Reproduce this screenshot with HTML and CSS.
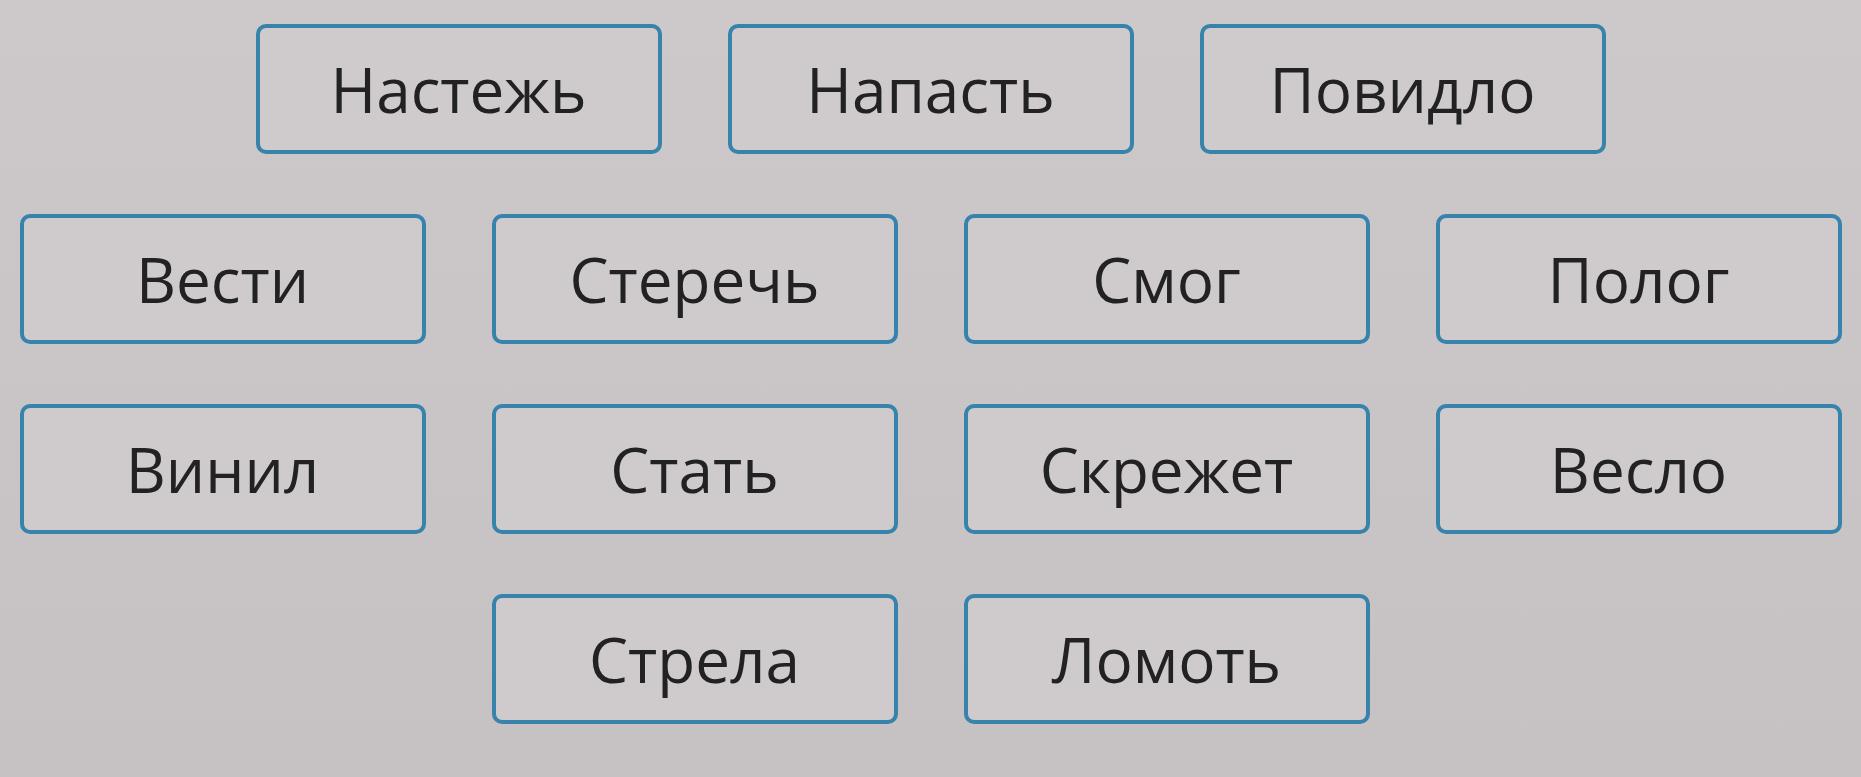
FILE: index.html
```html
<!DOCTYPE html>
<html lang="ru">
<head>
  <meta charset="UTF-8">
  <meta name="viewport" content="width=device-width, initial-scale=1.0">
  <title>Слова</title>
  <link rel="stylesheet" href="styles.css">
</head>
<body>
  <div class="board">
    <div class="row">
      <div class="word">Настежь</div>
      <div class="word">Напасть</div>
      <div class="word">Повидло</div>
    </div>
    <div class="row">
      <div class="word">Вести</div>
      <div class="word">Стеречь</div>
      <div class="word">Смог</div>
      <div class="word">Полог</div>
    </div>
    <div class="row">
      <div class="word">Винил</div>
      <div class="word">Стать</div>
      <div class="word">Скрежет</div>
      <div class="word">Весло</div>
    </div>
    <div class="row">
      <div class="word">Стрела</div>
      <div class="word">Ломоть</div>
    </div>
  </div>
</body>
</html>
```

FILE: styles.css
```css
body {
  margin: 0;
  font-family: "Open Sans", "Noto Sans", sans-serif;
  background: linear-gradient(to bottom, #cdc8ca, #c6c2c4);
  color: #232222;
  height: 100vh;
  overflow: hidden;
}

.board {
  display: flex;
  flex-direction: column;
  gap: 60px;
  padding-top: 24px;
}

.row {
  display: flex;
  justify-content: center;
  gap: 66px;
}

.word {
  width: 398px;
  height: 122px;
  border: 4px solid #3783ab;
  border-radius: 10px;
  background: #cfcbcd;
  display: flex;
  justify-content: center;
  align-items: center;
  font-size: 62px;
}
```
